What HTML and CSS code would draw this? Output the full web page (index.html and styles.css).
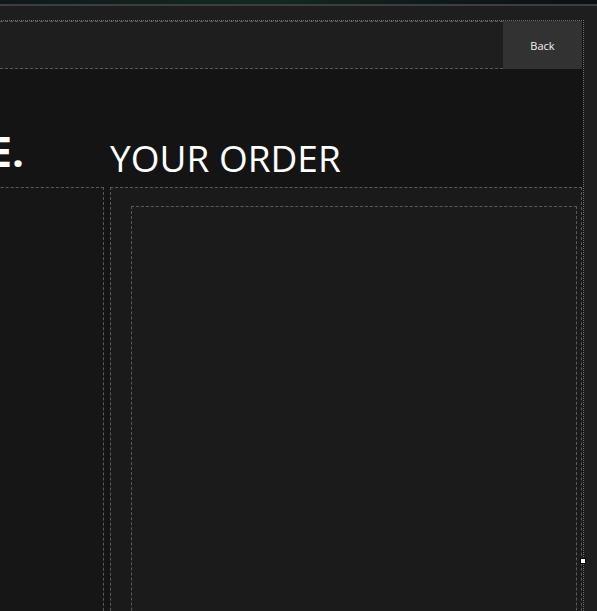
FILE: index.html
```html
<!DOCTYPE html>
<html lang="en">
<head>
<meta charset="utf-8">
<title>Your order</title>
<link rel="stylesheet" href="styles.css">
</head>
<body>
  <div class="strip"></div>
  <div class="rule"></div>
  <div class="window">
    <div class="shell">
      <header class="header">
        <div class="header-title"></div>
        <button class="back">Back</button>
      </header>
      <section class="col col-left">
        <h2 class="heading heading-left">MAKE YOUR CHOICE.</h2>
        <div class="box box-left"></div>
      </section>
      <section class="col col-right">
        <h2 class="heading heading-right">YOUR ORDER</h2>
        <div class="box box-right">
          <div class="order-panel"></div>
        </div>
      </section>
    </div>
  </div>
  <div class="handle"></div>
</body>
</html>
```

FILE: styles.css
```css
html, body {
  margin: 0;
  padding: 0;
}

body {
  width: 597px;
  height: 611px;
  overflow: hidden;
  background: #1c1c1c;
  font-family: "Open Sans", "Liberation Sans", sans-serif;
  color: #fff;
  position: relative;
}

.strip {
  height: 4px;
  background: linear-gradient(90deg, #0f171b 0%, #12241f 30%, #13291f 45%, #0f1a1c 70%, #0b1015 100%);
}

.rule {
  height: 2px;
  background: #3c3e42;
}

.window {
  background: #1e1e1e;
  padding-top: 14px;
}

.shell {
  margin-left: -200px;
  margin-right: 13px;
  border-top: 1px dotted #767676;
  border-right: 1px dotted #767676;
  padding-right: 1px;
  background: #141414;
  display: grid;
  grid-template-columns: 304px 472px;
  grid-template-rows: 48px 1fr;
  column-gap: 6px;
  height: 700px;
}

.header {
  grid-column: 1 / -1;
  display: flex;
  height: 48px;
  background: #1e1e1e;
}

.header-title {
  flex: 1;
  border-top: 1px dashed #5a5a5a;
  border-bottom: 1px dashed #5a5a5a;
}

.back {
  width: 79px;
  height: 48px;
  border: 0;
  padding: 0;
  background: #323232;
  color: #f2f2f2;
  font-family: "Open Sans", "Liberation Sans", sans-serif;
  font-size: 11px;
  display: flex;
  align-items: center;
  justify-content: center;
}

.col {
  display: flex;
  flex-direction: column;
}

.heading {
  margin: 0;
  font-weight: 400;
  line-height: 48px;
  white-space: nowrap;
  height: 118px;
  flex: none;
  display: flex;
  align-items: flex-end;
  box-sizing: border-box;
}

.heading-left {
  font-size: 42px;
  font-weight: 700;
  justify-content: flex-end;
  padding-right: 80px;
  padding-bottom: 12px;
}

.heading-right {
  font-size: 37px;
  padding-bottom: 5px;
}

.box {
  flex: 1;
  border: 1px dashed #5a5a5a;
  border-bottom: 0;
}

.box-left {
  border-left: 0;
  background: #161616;
}

.box-right {
  background: #1a1a1a;
  padding: 18px 4px 0 20px;
  display: flex;
}

.order-panel {
  flex: 1;
  border: 1px dashed #5a5a5a;
  border-bottom: 0;
  background: #1b1b1b;
}

.handle {
  position: absolute;
  left: 580px;
  top: 558px;
  width: 4px;
  height: 4px;
  background: #fff;
  border: 1px solid #000;
}
```
